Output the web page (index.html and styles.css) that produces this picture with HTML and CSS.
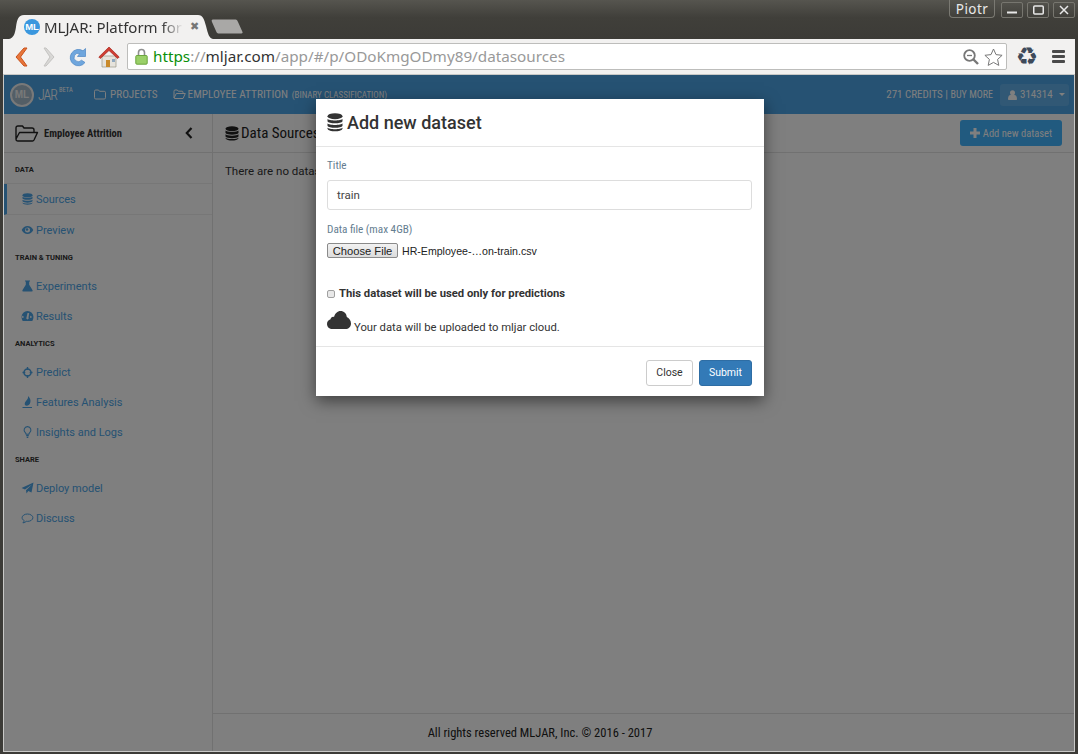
FILE: index.html
```html
<!DOCTYPE html>
<html lang="en">
<head>
<meta charset="utf-8">
<title>MLJAR: Platform for Machine Learning</title>
<link rel="stylesheet" href="styles.css">
</head>
<body>
<div class="window">
  <header class="titlebar">
    <div class="tabs">
      <svg class="tab-shape" width="240" height="25" viewBox="0 0 240 25"><path d="M0 25C5 24 6 19 7 13 8 6 9 1 15 1H189C194 1 195 5 197 12 199 20 200 24 204 25Z" fill="#f2f1f0"/><path d="M203 8C202 6 203 5.500 205 5.500H225C228 5.500 228 6 229 8L233.500 18C234 19.500 233 19.500 231 19.500H211C208 19.500 208 19 207 17Z" fill="#a9a8a6"/></svg>
      <div class="tab">
        <span class="favicon">ML</span>
        <span class="tab-title">MLJAR: Platform for</span>
        <span class="tab-close">✖</span>
      </div>
    </div>
    <div class="window-controls">
      <span class="profile">Piotr</span>
      <span class="wbtn"><svg width="10" height="10" viewBox="0 0 10 10"><path d="M0 7.500h10" stroke="#e8e8e8" stroke-width="2"/></svg></span>
      <span class="wbtn"><svg width="11" height="10" viewBox="0 0 11 10"><rect x=".75" y="1" width="9.500" height="8" rx="1" fill="none" stroke="#e8e8e8" stroke-width="1.500"/></svg></span>
      <span class="wbtn"><svg width="10" height="10" viewBox="0 0 10 10"><path d="M1 1l8 8M9 1L1 9" stroke="#e8e8e8" stroke-width="1.500"/></svg></span>
    </div>
  </header>

  <div class="toolbar">
    <svg class="tb-icon" width="17" height="20" viewBox="0 0 17 20"><path d="M10 1L2 10l8 9h3L6.500 10 13 1z" fill="#e8763a" stroke="#c9521c" stroke-linejoin="round"/></svg>
    <svg class="tb-icon" width="17" height="20" viewBox="0 0 17 20"><path d="M5 1l8 9-8 9H3l6-9-6-9z" fill="#d9d8d6" stroke="#c4c3c1" stroke-linejoin="round"/></svg>
    <svg class="tb-icon" width="20" height="20" viewBox="0 0 20 20"><path d="M17.500 9.500V1.500L15 3.800A8.200 8.200 0 1 0 17 15.500l-3.500-2.300A4.200 4.200 0 1 1 11.700 6.500L9.500 9.500z" fill="#6fa6dd" stroke="#4d86c4" stroke-width=".7"/></svg>
    <svg class="tb-icon" width="22" height="22" viewBox="0 0 22 22"><path d="M4 10h14v11H4z" fill="#e6e3dc" stroke="#9a9588" stroke-width=".7"/><path d="M8 14h4v7H8z" fill="#c98a2b"/><path d="M14 13h3v3h-3z" fill="#8fa8c0"/><path d="M11 1L.8 11l1.500 1.500L11 4.500l8.700 8L21.200 11z" fill="#cf3d32" stroke="#a82a20" stroke-width=".7"/></svg>
    <div class="omnibox">
      <svg class="lock" width="13" height="17" viewBox="0 0 13 17"><path d="M3.500 8V4.500a3 3 0 0 1 6 0V8" fill="none" stroke="#8f8f8f" stroke-width="1.600"/><rect x=".8" y="7.500" width="11.400" height="8.700" rx="1" fill="#9ad068" stroke="#6ca53f"/></svg>
      <span class="url"><span class="url-green">https</span><span class="url-gray">://</span><span class="url-host">mljar.com</span><span class="url-gray">/app/#/p/ODoKmgODmy89/datasources</span></span>
      <svg class="omni-zoom" width="16" height="16" viewBox="0 0 16 16"><circle cx="6.500" cy="6.500" r="5.300" fill="none" stroke="#777" stroke-width="1.800"/><path d="M4 6.500h5" stroke="#777" stroke-width="1.300"/><path d="M10.500 10.500L15 15" stroke="#777" stroke-width="2.400"/></svg>
      <svg class="omni-star" width="19" height="18" viewBox="0 0 19 18"><path d="M9.500 1l2.500 5.600 6.100.7-4.500 4.100 1.200 6-5.300-3-5.300 3 1.200-6L.9 7.300 7 6.600z" fill="#fff" stroke="#777" stroke-width="1"/></svg>
    </div>
    <span class="tb-recycle">♻</span>
    <div class="menu-icon"><i></i><i></i><i></i></div>
  </div>

  <div class="app">
    <nav class="navbar">
      <div class="brand">
        <span class="logo-mark">ML</span><span class="logo-text">JAR</span><sup class="logo-beta">BETA</sup>
      </div>
      <a class="nav-link"><svg class="ni" width="12" height="11" viewBox="0 0 12 11"><path d="M1.800 1h2.700l1 1.300h4.700q1.300 0 1.300 1.200v5.200q0 1.300-1.300 1.300H1.800Q.5 10 .5 8.700V2.300Q.5 1 1.800 1z" fill="none" stroke="currentColor"/></svg>PROJECTS</a>
      <a class="nav-link nav-project"><svg class="ni" width="13" height="11" viewBox="0 0 13 11"><path d="M1 9V2.200Q1 1 2 1h2.300l1 1.200H9q1 0 1 1V4.500M1 9l2.300-4.500h9L10 9.500H1.500z" fill="none" stroke="currentColor"/></svg>EMPLOYEE ATTRITION <small class="nav-small">(BINARY CLASSIFICATION)</small></a>
      <div class="nav-right">
        <span class="credits">271 CREDITS | <small class="buy">BUY MORE</small></span>
        <span class="user"><svg width="9" height="10" viewBox="0 0 9 10"><circle cx="4.500" cy="2.700" r="2.500" fill="currentColor"/><path d="M0 9.200C0 6.500 1 5 2.500 5h4C8 5 9 6.500 9 9.200 9 9.700 8.500 10 8 10H1C.5 10 0 9.700 0 9.200z" fill="currentColor"/></svg>314314<b class="caret"></b></span>
      </div>
    </nav>

    <div class="content">
      <aside class="sidebar">
        <div class="side-head">
          <svg class="side-folder" width="24" height="17" viewBox="0 0 24 17"><path d="M1 14V3q0-2 2-2h4.500l1.500 2h8q2 0 2 2v2.500M1 14l3.500-6.500h18L19 15q-.5 1-1.500 1H3q-2 0-2-2z" fill="none" stroke="#222" stroke-width="1.400" stroke-linejoin="round"/></svg>
          <span class="side-title">Employee Attrition</span>
          <svg class="side-back" width="8" height="12" viewBox="0 0 8 12"><path d="M6.500 1L1.800 6l4.700 5" fill="none" stroke="#222" stroke-width="2.200"/></svg>
        </div>
        <div class="side-label first">DATA</div>
        <a class="side-item active"><svg width="11" height="12" viewBox="0 0 11 12"><ellipse cx="5.500" cy="2.200" rx="5" ry="2" fill="currentColor"/><path d="M.5 3.700c1 1.300 9 1.300 10 0v1.800c-1 1.800-9 1.800-10 0zM.5 6.700c1 1.300 9 1.300 10 0v1.600c-1 1.800-9 1.800-10 0zM.5 9.500c1 1.300 9 1.300 10 0v.4c-1 2.300-9 2.300-10 0z" fill="currentColor"/></svg>Sources</a>
        <a class="side-item"><svg width="12" height="10" viewBox="0 0 12 10"><path fill-rule="evenodd" d="M.2 5C1.500 2.500 3.500 1 6 1s4.500 1.500 5.800 4C10.500 7.500 8.500 9 6 9S1.500 7.500.2 5zM3.500 5a2.500 2.500 0 1 0 5 0 2.500 2.500 0 0 0-5 0z" fill="currentColor"/><circle cx="5.500" cy="4.500" r="1.300" fill="currentColor"/></svg>Preview</a>
        <div class="side-label">TRAIN &amp; TUNING</div>
        <a class="side-item"><svg width="11" height="12" viewBox="0 0 11 12"><path d="M3 .5h5v1H7.200v3.300L10.600 10.300Q11 11.500 9.800 11.500H1.200Q0 11.500.4 10.300L3.800 4.800V1.500H3z" fill="currentColor"/></svg>Experiments</a>
        <a class="side-item"><svg width="12" height="10" viewBox="0 0 12 10"><path fill-rule="evenodd" d="M6 0a6 6 0 0 1 6 6c0 1.500-.4 2.800-1.200 4H1.200C.4 8.800 0 7.500 0 6a6 6 0 0 1 6-6zM5 6.500a1.200 1.200 0 1 0 2 0L7.700 2 6 2zM2 5a1 1 0 1 0 0 1.800zM10 5a1 1 0 1 0 0 1.800z" fill="currentColor"/></svg>Results</a>
        <div class="side-label">ANALYTICS</div>
        <a class="side-item"><svg width="10" height="11" viewBox="0 0 10 11"><circle cx="5" cy="5.500" r="3.500" fill="none" stroke="currentColor" stroke-width="1.500"/><path d="M4.300 0h1.400v3H4.300zM4.300 8h1.400v3H4.300zM0 4.800h2.800v1.400H0zM7.200 4.800H10v1.400H7.200z" fill="currentColor"/></svg>Predict</a>
        <a class="side-item"><svg width="10" height="12" viewBox="0 0 10 12"><path d="M0 11h9.500v1H0zM3 9.600C1.800 8.500 2 6.500 3.500 5 5 3.500 5.800 2 5.500 0c2 2 3 4 2.300 6.500C7.400 8.200 6 10 3 9.600z" fill="currentColor"/></svg>Features Analysis</a>
        <a class="side-item"><svg width="8" height="12" viewBox="0 0 8 12"><path d="M4 .6a3.400 3.400 0 0 1 2.200 6c-.5.500-.8 1-.9 1.700H2.700c-.1-.7-.4-1.200-.9-1.700A3.400 3.400 0 0 1 4 .6z" fill="none" stroke="currentColor" stroke-width="1.100"/><path d="M2.700 9h2.600v1.300H2.700zM3.200 10.700h1.600V12H3.200z" fill="currentColor"/></svg>Insights and Logs</a>
        <div class="side-label">SHARE</div>
        <a class="side-item"><svg width="12" height="12" viewBox="0 0 12 12"><path d="M12 .5L10 10.500 6.800 9 5 11.500 4.500 8.300 10.500 2.500 3.500 7.500 0 6z" fill="currentColor"/></svg>Deploy model</a>
        <a class="side-item"><svg width="12" height="11" viewBox="0 0 12 11"><path d="M6 1C3 1 .6 2.600.6 4.700c0 1.200.8 2.200 2.100 2.900-.1.800-.5 1.500-1.300 2.300 1.500-.1 2.700-.8 3.400-1.600l1.200.1c3 0 5.400-1.700 5.400-3.700S9 1 6 1z" fill="none" stroke="currentColor"/></svg>Discuss</a>
      </aside>
      <main class="main">
        <div class="main-head">
          <h1 class="main-title"><svg width="14" height="15" viewBox="0 0 14 15"><ellipse cx="7" cy="2.800" rx="6.500" ry="2.500" fill="currentColor"/><path d="M.5 4.600c1 1.800 12 1.800 13 0v2.300c-1 2.300-12 2.300-13 0zM.5 8.300c1 1.800 12 1.800 13 0v2.200c-1 2.300-12 2.300-13 0zM.5 11.700c1 1.800 12 1.800 13 0v.5c-1 3.100-12 3.100-13 0z" fill="currentColor"/></svg>Data Sources</h1>
          <button class="add-btn" type="button"><svg width="10" height="10" viewBox="0 0 10 10"><path d="M3.500 0h3v3.500H10v3H6.500V10h-3V6.500H0v-3h3.500z" fill="currentColor"/></svg>Add new dataset</button>
        </div>
        <p class="empty">There are no datasets</p>
        <footer class="foot">All rights reserved MLJAR, Inc. © 2016 - 2017</footer>
      </main>
    </div>

    <div class="backdrop"></div>
    <section class="modal">
      <div class="modal-head">
        <svg width="16" height="19" viewBox="0 0 16 19"><ellipse cx="8" cy="3.200" rx="7.500" ry="3" fill="#333"/><path d="M.5 5.700c1 2.300 14 2.300 15 0v2.600c-1 2.700-14 2.700-15 0zM.5 10.200c1 2.300 14 2.300 15 0v2.500c-1 2.700-14 2.700-15 0zM.5 14.500c1 2.300 14 2.300 15 0v1.200c-1 3.500-14 3.500-15 0z" fill="#333"/></svg>
        <h2 class="modal-title">Add new dataset</h2>
      </div>
      <div class="modal-body">
        <label class="field-label">Title</label>
        <div class="text-input">train</div>
        <label class="field-label second">Data file (max 4GB)</label>
        <div class="file-row"><span class="file-btn">Choose File</span><span class="file-name">HR-Employee-…on-train.csv</span></div>
        <div class="check-row"><span class="check"></span><b class="check-text">This dataset will be used only for predictions</b></div>
        <div class="cloud-row"><svg width="24" height="18" viewBox="0 0 24 18"><path d="M5.500 18C2.500 18 0 16 0 13c0-2.300 1.400-4 3.500-4.700C3.800 6.500 5.300 5.500 7 6 8 2.500 10.500 0 13.500 0c3.500 0 6 2.500 6.300 6C22 7 24 9.500 24 12.500 24 16 21.500 18 18.500 18z" fill="#333"/></svg><span>Your data will be uploaded to mljar cloud.</span></div>
      </div>
      <div class="modal-foot">
        <button class="btn btn-default" type="button">Close</button>
        <button class="btn btn-primary" type="button">Submit</button>
      </div>
    </section>
  </div>
</div>
</body>
</html>
```
FILE: styles.css
```css
* { box-sizing: border-box; }
html, body { margin: 0; height: 100%; overflow: hidden; }
body { font-family: Roboto, "Liberation Sans", sans-serif; color: #333; background: #3c3b37; }
.window { width: 1078px; height: 754px; display: flex; flex-direction: column; padding-bottom: 3px; background: #3c3b37; }

.titlebar { height: 39px; flex: none; display: flex; justify-content: space-between; background: linear-gradient(#56554f, #403f3a 45%, #3c3b37); }
.tabs { position: relative; margin: 14px 0 0 9px; width: 240px; height: 25px; }
.tab-shape { position: absolute; left: 0; top: 0; }
.tab { position: relative; display: flex; align-items: center; height: 25px; padding-left: 15px; }
.favicon { width: 16px; height: 16px; border-radius: 50%; background: #3a97de; color: #fff; font: bold 9.500px "Liberation Sans", sans-serif; font-stretch: condensed; display: flex; align-items: center; justify-content: center; }
.tab-title { width: 139px; margin-left: 4px; font: 15px "Noto Sans", sans-serif; color: #333; white-space: nowrap; overflow: hidden; -webkit-mask-image: linear-gradient(90deg, #000 85%, transparent); mask-image: linear-gradient(90deg, #000 85%, transparent); }
.tab-close { margin-left: 7px; font: 11px "DejaVu Sans", sans-serif; color: #777; }
.window-controls { display: flex; gap: 4px; padding-right: 3px; align-items: flex-start; }
.profile { width: 46px; height: 18px; margin-right: 2px; border: 1px solid #7a7972; border-top: 0; border-radius: 0 0 4px 4px; color: #e8e8e8; font: 13.500px "Noto Sans", sans-serif; display: flex; align-items: center; justify-content: center; letter-spacing: .4px; }
.wbtn { width: 22px; height: 16px; margin-top: 2px; border: 1px solid #77766f; border-radius: 2px; display: flex; align-items: center; justify-content: center; }

.toolbar { height: 36px; flex: none; margin: 0 3px; background: #f2f1f0; display: flex; align-items: center; padding: 0 0 1px 11px; gap: 10px; }
.tb-icon { flex: none; }
.omnibox { width: 880px; height: 27px; margin-left: -3px; background: #fff; border: 1px solid #bdbdbb; border-radius: 2px; display: flex; align-items: center; padding-left: 7px; flex: none; }
.lock { flex: none; margin-right: 5px; }
.url { font: 15.250px/20px "Noto Sans", sans-serif; white-space: nowrap; flex: 1; margin-top: -2px; }
.url-green { color: #0a8f0a; }
.url-gray { color: #999; }
.url-host { color: #333; }
.omni-zoom { margin-right: 5px; flex: none; }
.omni-star { margin-right: 3px; flex: none; }
.tb-recycle { flex: none; width: 20px; height: 20px; font: 25px/20px "DejaVu Sans", sans-serif; color: #3e4a5a; display: flex; justify-content: center; }
.menu-icon { display: flex; flex-direction: column; gap: 2px; width: 13px; margin-left: 5px; }
.menu-icon i { height: 3px; background: #4a4a4a; border-radius: 1px; }

.app { position: relative; flex: 1; margin: 0 4px; background: #fff; display: flex; flex-direction: column; min-height: 0; box-shadow: 0 0 0 1px #c8c8c6; }
.navbar { height: 39px; flex: none; display: flex; align-items: center; padding: 0 5px 0 6px; background: #4ca4e6; color: #fff; font-family: Roboto, sans-serif; font-stretch: condensed; font-size: 11.200px; }
.brand { display: flex; align-items: center; width: 84px; position: relative; }
.logo-mark { width: 24px; height: 24px; border: 2px solid #f2f2f2; border-radius: 50%; background: #a6bccd; color: #f2f2f2; font: bold 10px "Liberation Sans", sans-serif; display: flex; align-items: center; justify-content: center; }
.logo-text { margin-left: 4px; font-size: 14px; font-weight: 300; letter-spacing: -1px; }
.logo-beta { font-size: 6.500px; margin: -10px 0 0 2px; }
.nav-link { display: flex; align-items: center; margin-right: 15px; color: #fff; white-space: pre; }
.nav-project { font-size: 11.300px; margin-right: 0; }
.ni { margin-right: 4px; }
.nav-project .ni { margin-right: 2px; }
.nav-small { font-size: 9px; margin-left: 1px; }
.nav-right { margin-left: auto; display: flex; align-items: center; gap: 7px; }
.credits { font-size: 11px; }
.buy { font-size: 10px; }
.user { display: flex; align-items: center; gap: 3px; width: 69px; height: 22px; padding-left: 8px; border-radius: 3px; background: #62b0ea; font-size: 11px; }
.caret { width: 0; height: 0; margin-left: 3px; border: 3px solid transparent; border-top-color: #fff; border-bottom: 0; }

.content { flex: 1; display: flex; min-height: 0; background: #fff; }
.sidebar { width: 209px; flex: none; border-right: 1px solid #e2e2e2; color: #4ca4e6; font-size: 11px; }
.side-head { height: 39px; display: flex; align-items: center; padding: 0 19px 0 11px; border-bottom: 1px solid #e2e2e2; }
.side-folder { flex: none; }
.side-title { flex: 1; margin-left: 5px; font-size: 10.500px; font-weight: 700; color: #333; font-stretch: condensed; }
.side-label { height: 26px; padding: 8px 0 0 11px; font-size: 7.500px; font-weight: 700; color: #333; }
.side-label.first { height: 31px; padding-top: 12px; border-bottom: 1px solid #eee; }
.side-item { height: 30px; display: flex; align-items: center; padding-left: 17px; gap: 2px; }
.side-item svg { width: 13px; flex: none; }
.side-item.active { height: 31px; border-left: 3px solid #4ca4e6; border-bottom: 1px solid #eee; padding-left: 14px; }

.main { flex: 1; display: flex; flex-direction: column; min-width: 0; }
.main-head { height: 39px; flex: none; display: flex; align-items: center; justify-content: space-between; padding: 0 12px; border-bottom: 1px solid #e2e2e2; }
.main-title { margin: 0; display: flex; align-items: center; gap: 2px; font-size: 15px; font-weight: 400; font-stretch: condensed; color: #222; }
.add-btn { width: 102px; height: 26px; border: 0; border-radius: 3px; background: #42b4ff; color: #fff; font: 10.500px Roboto, sans-serif; font-stretch: condensed; display: flex; align-items: center; justify-content: center; gap: 3px; }
.empty { margin: 11px 0 0 12px; font-size: 11.500px; flex: 1; }
.foot { height: 38px; flex: none; border-top: 1px solid #e2e2e2; display: flex; align-items: center; justify-content: center; padding-right: 207px; font-size: 12.500px; color: #222; font-stretch: condensed; }

.backdrop { position: absolute; inset: 0; background: rgba(0, 0, 0, .5); }
.modal { position: absolute; left: 312px; top: 24px; width: 448px; height: 297px; background: #fff; box-shadow: 0 5px 15px rgba(0, 0, 0, .5); display: flex; flex-direction: column; }
.modal-head { height: 48px; flex: none; display: flex; align-items: center; gap: 4px; padding-left: 11px; border-bottom: 1px solid #e5e5e5; }
.modal-title { margin: 0; font-size: 18px; font-weight: 500; color: #333; }
.modal-body { flex: 1; padding: 12px 12px 0 11px; font-size: 11.500px; min-height: 0; }
.field-label { display: block; color: #647d90; font-size: 11.200px; font-stretch: condensed; line-height: 14px; }
.field-label.second { margin-top: 13px; }
.text-input { height: 30px; margin-top: 7px; padding: 0 9px; border: 1px solid #ddd; border-radius: 3px; display: flex; align-items: center; font-size: 11.500px; color: #444; }
.file-row { display: flex; align-items: center; margin-top: 6px; font: 11.200px "Liberation Sans", sans-serif; color: #222; }
.file-btn { width: 71px; height: 15px; background: linear-gradient(#f2f2f2, #dcdcdc); border: 1px solid #8a8a8a; border-radius: 2px; display: flex; align-items: center; justify-content: center; }
.file-name { margin-left: 4px; font-size: 10.600px; }
.check-row { display: flex; align-items: center; margin-top: 29px; }
.check { width: 8px; height: 8px; margin-right: 4px; border: 1px solid #a0a0a0; border-radius: 2px; background: #e8e8e8; }
.check-text { font-size: 11.250px; color: #333; font-weight: 700; }
.cloud-row { display: flex; align-items: flex-end; gap: 3px; margin-top: 11px; color: #333; font-size: 11.250px; }
.cloud-row span { margin-bottom: -5px; }
.modal-foot { height: 50px; flex: none; border-top: 1px solid #e5e5e5; display: flex; justify-content: flex-end; align-items: center; gap: 6px; padding: 2px 12px 0 0; }
.btn { height: 26px; border-radius: 3px; font: 10.500px Roboto, sans-serif; }
.btn-default { width: 47px; background: #fff; border: 1px solid #ccc; color: #333; }
.btn-primary { width: 53px; background: #337ab7; border: 1px solid #2e6da4; color: #fff; }
```
